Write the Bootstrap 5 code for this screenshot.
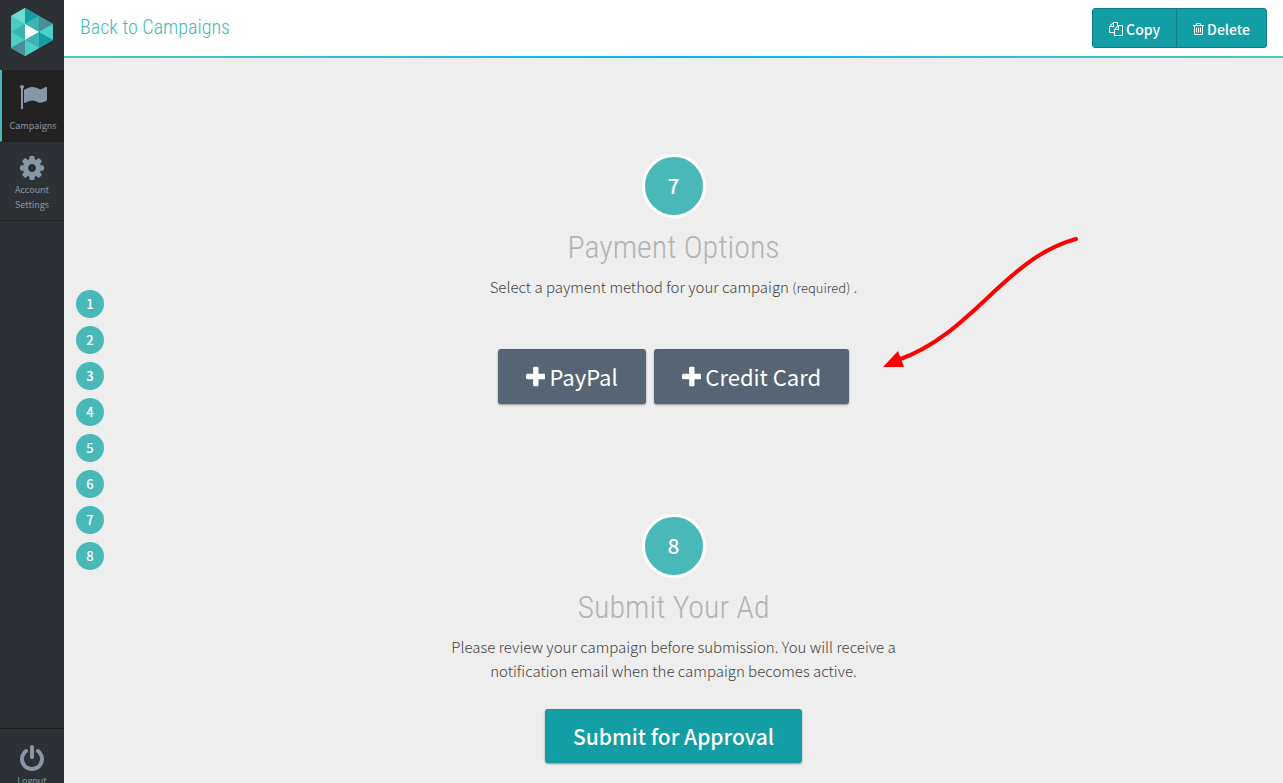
<!DOCTYPE html>
<html lang="en">
<head>
<meta charset="utf-8">
<meta name="viewport" content="width=device-width, initial-scale=1">
<title>Campaigns</title>
<link href="https://cdn.jsdelivr.net/npm/bootstrap@5.3.0/dist/css/bootstrap.min.css" rel="stylesheet">
<style>
:root { --teal: #49b8b9; --deep: #139da5; --slate: #566474; }
body { font-family: "Source Sans Pro", "Noto Sans CJK SC", sans-serif; font-size: 15px; line-height: 24px; color: #444; background: #eee; }
.ico { height: 1em; fill: currentColor; flex: none; }
.side { width: 64px; background: #2d3135; }
.brand-box { height: 70px; padding: 8px 11px; }
.side-link { color: #8996a5; font-size: 9px; line-height: 15px; text-decoration: none; padding: 12px 4px 8px; border-bottom: 1px solid #222; }
.side-link:hover { color: #fff; }
.side-link .ico { font-size: 28px; }
.side-link.active { background: #222; border-left: 2px solid var(--teal); padding-top: 13px; gap: 7px; }
.side-link.logout { height: 55px; padding: 16px 4px 0; overflow: hidden; border-top: 1px solid #1d1f21; border-bottom: 0; }
.topbar { height: 56px; }
.rule { height: 2px; background: linear-gradient(90deg, #49c8c0, #00b8f0, #49c8c0); }
.cond { font-family: "Roboto Condensed", Roboto, sans-serif; font-weight: 300; }
.back { font-size: 20px; color: var(--teal); text-decoration: none; padding-bottom: 2px; }
.btn-deep { --bs-btn-color: #fff; --bs-btn-bg: var(--deep); --bs-btn-border-color: #0f7d84; --bs-btn-hover-color: #fff; --bs-btn-hover-bg: #0f8b92; --bs-btn-hover-border-color: #0f7d84; --bs-btn-border-radius: 3px; --bs-btn-font-size: 14px; --bs-btn-font-weight: 500; --bs-btn-padding-x: 16px; --bs-btn-line-height: 24px; padding-top: 8px; gap: 3px; }
.btn-wide { --bs-btn-color: #fff; --bs-btn-hover-color: #fff; --bs-btn-border-width: 0; --bs-btn-font-size: 21px; --bs-btn-font-weight: 500; --bs-btn-line-height: 30px; --bs-btn-padding-y: 12px; --bs-btn-padding-x: 28px; --bs-btn-border-radius: 3px; --bs-btn-bg: var(--deep); --bs-btn-hover-bg: #0f8b92; box-shadow: 0 1px 2px rgba(0,0,0,.4); }
.btn-slate { --bs-btn-bg: var(--slate); --bs-btn-hover-bg: #485463; --bs-btn-font-size: 22px; --bs-btn-font-weight: 400; --bs-btn-line-height: 31px; }
.btn-slate .ico { font-size: 25px; }
.side-col { flex: 1 0 0; }
.steps { padding-top: 232px; }
.dot { width: 28px; height: 28px; margin-left: 12px; background: var(--teal); color: #fff; font-size: 13px; font-weight: 500; text-decoration: none; }
.steps { width: 0; }
.flow { width: 480px; padding-top: 96px; }
.step { min-height: 360px; }
.step:last-child { min-height: 0; }
.num { width: 64px; height: 64px; padding-bottom: 2px; border: 3px solid #fff; background: var(--teal); color: #fff; font-size: 21px; font-weight: 500; }
.step h2 { font-size: 32px; line-height: 40px; color: #b3b3b3; margin: 9px 0 8px; }
.step p { font-weight: 300; margin-bottom: 26px; padding: 0 16px; }
.step small { font-size: 13px; }
.methods { margin-top: 23px; }
.pointer { left: calc(50% + 196px); top: 162px; }
</style>
</head>
<body>
<div class="d-flex min-vh-100">
  <nav class="side d-flex flex-column flex-shrink-0 text-center">
    <a href="#" class="brand-box d-block" aria-label="Home">
      <svg class="d-block" width="42" height="48" viewBox="0 0 42 48">
        <path fill="#49c8c0" d="M14 0 42 16V32L14 48 0 40V8z"/>
        <path fill="#70dccb" d="M0 8 14 0V16z"/>
        <path fill="#4bcdc3" d="M0 8V24L14 16z"/>
        <path fill="#3cb4b4" d="M0 24 14 16V32z"/>
        <path fill="#4bd0c6" d="M0 24V40L14 32z"/>
        <path fill="#4b8c99" d="M0 40 14 32V48z"/>
        <path fill="#139da5" d="M14 0V16L28 8z"/>
        <path fill="#3cb4b4" d="M14 16 28 8V24z"/>
        <path fill="#fff" d="M14 16V32L28 24z"/>
        <path fill="#3cb4b4" d="M14 32 28 24V40z"/>
        <path fill="#4bd0c6" d="M14 32V48L28 40z"/>
        <path fill="#4b8c99" d="M28 8V24L42 16z"/>
        <path fill="#4bd0c6" d="M28 24 42 16V32z"/>
        <path fill="#139da5" d="M28 24V40L42 32z"/>
      </svg>
    </a>
    <a href="#" class="side-link active d-flex flex-column align-items-center">
      <svg class="ico" viewBox="0 0 1792 1792"><path d="M320 256q0 72-64 110v1266q0 13-9.500 22.500t-22.500 9.500h-64q-13 0-22.500-9.500t-9.500-22.500v-1266q-64-38-64-110 0-53 37.500-90.500t90.500-37.500 90.500 37.500 37.500 90.500zm1472 64v763q0 25-12.500 38.500t-39.500 27.500q-215 116-369 116-61 0-123.500-22t-108.500-48-115.500-48-142.500-22q-192 0-464 146-17 9-33 9-26 0-45-19t-19-45v-742q0-32 31-55 21-14 79-43 236-120 421-120 107 0 200 29t219 88q38 19 88 19 54 0 117.500-21t110-47 88-47 54.500-21q26 0 45 19t19 45z"/></svg>
      <span>Campaigns</span>
    </a>
    <a href="#" class="side-link d-flex flex-column align-items-center">
      <svg class="ico" viewBox="0 0 1792 1792"><path d="M1152 896q0-106-75-181t-181-75-181 75-75 181 75 181 181 75 181-75 75-181zm512-109v222q0 12-8 23t-20 13l-185 28q-19 54-39 91 35 50 107 138 10 12 10 25t-9 23q-27 37-99 108t-94 71q-12 0-26-9l-138-108q-44 23-91 38-16 136-29 186-7 28-36 28h-222q-14 0-24.500-8.500t-11.500-21.500l-28-184q-49-16-90-37l-141 107q-10 9-25 9-14 0-25-11-126-114-165-168-7-10-7-23 0-12 8-23 15-21 51-66.500t54-70.500q-27-50-41-99l-183-27q-13-2-21-12.500t-8-23.500v-222q0-12 8-23t19-13l186-28q14-46 39-92-40-57-107-138-10-12-10-24 0-10 9-23 26-36 98.500-107.500t94.500-71.500q13 0 26 10l138 107q44-23 91-38 16-136 29-186 7-28 36-28h222q14 0 24.500 8.500t11.500 21.500l28 184q49 16 90 37l142-107q9-9 24-9 13 0 25 10 129 119 165 170 7 8 7 22 0 12-8 23-15 21-51 66.500t-54 70.500q26 50 41 98l183 28q13 2 21 12.500t8 23.500z"/></svg>
      <span>Account<br>Settings</span>
    </a>
    <a href="#" class="side-link logout d-flex flex-column align-items-center mt-auto">
      <svg class="ico" viewBox="0 0 1792 1792"><path d="M1664 896q0 156-61 298t-164 245-245 164-298 61-298-61-245-164-164-245-61-298q0-182 80.500-343t226.500-270q43-32 95.500-25t83.500 50q32 42 24.500 94.500t-49.500 84.500q-98 74-151.500 181t-53.500 228q0 104 40.500 198.500t109.500 163.500 163.500 109.500 198.500 40.500 198.500-40.500 163.500-109.500 109.500-163.500 40.500-198.500q0-121-53.500-228t-151.500-181q-42-32-49.500-84.500t24.500-94.500q31-43 84-50t95 25q146 109 226.500 270t80.500 343zm-640-768v640q0 52-38 90t-90 38-90-38-38-90v-640q0-52 38-90t90-38 90 38 38 90z"/></svg>
      <span>Logout</span>
    </a>
  </nav>
  <div class="flex-grow-1 d-flex flex-column">
    <header class="topbar bg-white d-flex align-items-center justify-content-between px-3">
      <a href="#" class="back cond">Back to Campaigns</a>
      <div class="btn-group">
        <button type="button" class="btn btn-deep d-flex align-items-center">
          <svg class="ico" viewBox="0 0 1792 1792"><path d="M1696 384q40 0 68 28t28 68v1216q0 40-28 68t-68 28h-960q-40 0-68-28t-28-68v-288h-544q-40 0-68-28t-28-68v-672q0-40 20-88t48-76l408-408q28-28 76-48t88-20h416q40 0 68 28t28 68v328q68-40 128-40h416zm-544 213l-299 299h299v-299zm-640-384l-299 299h299v-299zm196 647l316-316v-416h-384v416q0 40-28 68t-68 28h-416v640h512v-256q0-40 20-88t48-76zm956 804v-1152h-384v416q0 40-28 68t-68 28h-416v640h896z"/></svg>
          Copy
        </button>
        <button type="button" class="btn btn-deep d-flex align-items-center">
          <svg class="ico" viewBox="192 0 1408 1792"><path d="M704 736v576q0 14-9 23t-23 9h-64q-14 0-23-9t-9-23v-576q0-14 9-23t23-9h64q14 0 23 9t9 23zm256 0v576q0 14-9 23t-23 9h-64q-14 0-23-9t-9-23v-576q0-14 9-23t23-9h64q14 0 23 9t9 23zm256 0v576q0 14-9 23t-23 9h-64q-14 0-23-9t-9-23v-576q0-14 9-23t23-9h64q14 0 23 9t9 23zm128 724v-948h-896v948q0 22 7 40.500t14.500 27 10.500 8.500h832q3 0 10.500-8.500t14.500-27 7-40.500zm-672-1076h448l-48-117q-7-9-17-11h-317q-10 2-17 11zm928 32v64q0 14-9 23t-23 9h-96v948q0 83-47 143.500t-113 60.500h-832q-66 0-113-58.500t-47-141.500v-952h-96q-14 0-23-9t-9-23v-64q0-14 9-23t23-9h309l70-167q15-37 54-63t79-26h320q40 0 79 26t54 63l70 167h309q14 0 23 9t9 23z"/></svg>
          Delete
        </button>
      </div>
    </header>
    <div class="rule"></div>
    <main class="d-flex flex-grow-1 position-relative">
      <nav class="side-col steps d-flex flex-column gap-2" aria-label="Steps">
        <a href="#" class="dot rounded-circle d-flex align-items-center justify-content-center">1</a>
        <a href="#" class="dot rounded-circle d-flex align-items-center justify-content-center">2</a>
        <a href="#" class="dot rounded-circle d-flex align-items-center justify-content-center">3</a>
        <a href="#" class="dot rounded-circle d-flex align-items-center justify-content-center">4</a>
        <a href="#" class="dot rounded-circle d-flex align-items-center justify-content-center">5</a>
        <a href="#" class="dot rounded-circle d-flex align-items-center justify-content-center">6</a>
        <a href="#step7" class="dot rounded-circle d-flex align-items-center justify-content-center">7</a>
        <a href="#step8" class="dot rounded-circle d-flex align-items-center justify-content-center">8</a>
      </nav>
      <div class="flow text-center pb-3">
        <section id="step7" class="step d-flex flex-column align-items-center">
          <div class="num rounded-circle d-flex align-items-center justify-content-center">7</div>
          <h2 class="cond">Payment Options</h2>
          <p>Select a payment method for your campaign <small>(required)</small> .</p>
          <div class="methods d-flex gap-2">
            <button type="button" class="btn btn-wide btn-slate d-flex align-items-center">
              <svg class="ico me-1" viewBox="192 0 1408 1792"><path d="M1600 800v192q0 40-28 68t-68 28h-416v416q0 40-28 68t-68 28h-192q-40 0-68-28t-28-68v-416h-416q-40 0-68-28t-28-68v-192q0-40 28-68t68-28h416v-416q0-40 28-68t68-28h192q40 0 68 28t28 68v416h416q40 0 68 28t28 68z"/></svg>
              PayPal
            </button>
            <button type="button" class="btn btn-wide btn-slate d-flex align-items-center">
              <svg class="ico me-1" viewBox="192 0 1408 1792"><path d="M1600 800v192q0 40-28 68t-68 28h-416v416q0 40-28 68t-68 28h-192q-40 0-68-28t-28-68v-416h-416q-40 0-68-28t-28-68v-192q0-40 28-68t68-28h416v-416q0-40 28-68t68-28h192q40 0 68 28t28 68v416h416q40 0 68 28t28 68z"/></svg>
              Credit Card
            </button>
          </div>
        </section>
        <section id="step8" class="step d-flex flex-column align-items-center">
          <div class="num rounded-circle d-flex align-items-center justify-content-center">8</div>
          <h2 class="cond">Submit Your Ad</h2>
          <p>Please review your campaign before submission. You will receive a notification email when the campaign becomes active.</p>
          <button type="button" class="btn btn-wide">Submit for Approval</button>
        </section>
      </div>
      <div class="side-col"></div>
      <svg class="pointer position-absolute pe-none" width="230" height="170" viewBox="0 0 230 170">
        <path d="M206 19C135 38 103 114 28 140" fill="none" stroke="#f00" stroke-width="4" stroke-linecap="round"/>
        <path d="M13 147 28 131 34 147z" fill="#f00"/>
      </svg>
    </main>
  </div>
</div>
<script src="https://cdn.jsdelivr.net/npm/bootstrap@5.3.0/dist/js/bootstrap.bundle.min.js"></script>
</body>
</html>
